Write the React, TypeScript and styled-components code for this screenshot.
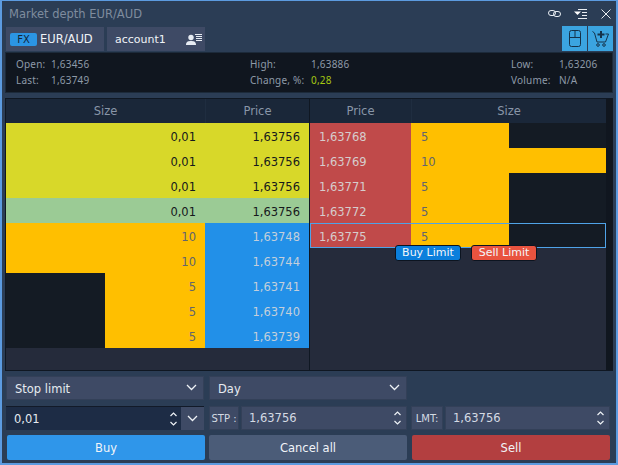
import React from 'react'
import styled, { createGlobalStyle } from 'styled-components'

const Global = createGlobalStyle`
  html, body { margin: 0; padding: 0; background: #2b3d55; }
  * { box-sizing: border-box; }
  body { font-family: "DejaVu Sans", Tahoma, sans-serif; font-size: 12px; }
`

type Level = { size: string; price: string; fill: number; kind?: 'own' | 'last' }

const bids: Level[] = [
  { size: '0,01', price: '1,63756', fill: 1, kind: 'own' },
  { size: '0,01', price: '1,63756', fill: 1, kind: 'own' },
  { size: '0,01', price: '1,63756', fill: 1, kind: 'own' },
  { size: '0,01', price: '1,63756', fill: 1, kind: 'last' },
  { size: '10', price: '1,63748', fill: 1 },
  { size: '10', price: '1,63744', fill: 1 },
  { size: '5', price: '1,63741', fill: 0.5 },
  { size: '5', price: '1,63740', fill: 0.5 },
  { size: '5', price: '1,63739', fill: 0.5 },
]

const asks: Level[] = [
  { size: '5', price: '1,63768', fill: 0.5 },
  { size: '10', price: '1,63769', fill: 1 },
  { size: '5', price: '1,63771', fill: 0.5 },
  { size: '5', price: '1,63772', fill: 0.5 },
  { size: '5', price: '1,63775', fill: 0.5 },
]

export default function App() {
  return (
    <>
      <Global />
      <Win>
        <TitleBar>
          <Title>Market depth EUR/AUD</Title>
          <WinIcons>
            <LinkIcon />
            <MenuIcon />
            <CloseIcon />
          </WinIcons>
        </TitleBar>

        <TabRow>
          <Tab $w={98}>
            <FxBadge>FX</FxBadge>
            EUR/AUD
          </Tab>
          <AccountTab>
            account1
            <AccountIcon />
          </AccountTab>
          <ToolGroup>
            <ToolBtn><MouseIcon /></ToolBtn>
            <ToolBtn><CartIcon /></ToolBtn>
          </ToolGroup>
        </TabRow>

        <Info>
          <InfoCol $w={234}>
            <InfoRow><InfoLabel $w={35}>Open:</InfoLabel>1,63456</InfoRow>
            <InfoRow><InfoLabel $w={35}>Last:</InfoLabel>1,63749</InfoRow>
          </InfoCol>
          <InfoCol $w={261}>
            <InfoRow><InfoLabel $w={61}>High:</InfoLabel>1,63886</InfoRow>
            <InfoRow><InfoLabel $w={61}>Change, %:</InfoLabel><Green>0,28</Green></InfoRow>
          </InfoCol>
          <InfoCol $w={90}>
            <InfoRow><InfoLabel $w={48}>Low:</InfoLabel>1,63206</InfoRow>
            <InfoRow><InfoLabel $w={48}>Volume:</InfoLabel>N/A</InfoRow>
          </InfoCol>
        </Info>

        <Book>
          <BidSide>
            <HeadRow $cols="199px 1fr">
              <HeadCell>Size</HeadCell>
              <HeadCell>Price</HeadCell>
            </HeadRow>
            {bids.map((l, i) => (
              <BidRow key={i}>
                <BidSize>
                  <SizeBar $kind={l.kind} style={{ width: `${Math.ceil(l.fill * 199)}px` }} />
                  <SizeText $kind={l.kind}>{l.size}</SizeText>
                </BidSize>
                <BidPrice $kind={l.kind}>{l.price}</BidPrice>
              </BidRow>
            ))}
          </BidSide>
          <AskSide>
            <HeadRow $cols="101px 1fr">
              <HeadCell>Price</HeadCell>
              <HeadCell>Size</HeadCell>
            </HeadRow>
            {asks.map((l, i) => (
              <AskRow key={i} $active={i === asks.length - 1}>
                <AskPrice>{l.price}</AskPrice>
                <AskSize>
                  <AskBar style={{ width: `${l.fill * 100}%` }} />
                  <AskText>{l.size}</AskText>
                </AskSize>
              </AskRow>
            ))}
            <LimitTips>
              <LimitTip $color="#0b7fdc">Buy Limit</LimitTip>
              <LimitTip $color="#e9533f">Sell Limit</LimitTip>
            </LimitTips>
          </AskSide>
          <Rail />
        </Book>

        <SelectRow>
          <Select>Stop limit<Chevron /></Select>
          <Select>Day<Chevron /></Select>
        </SelectRow>

        <InputRow>
          <QtyField>
            <QtyValue>0,01</QtyValue>
            <Spinner />
            <QtyDrop><Chevron /></QtyDrop>
          </QtyField>
          <PriceGroup>
            <PriceTag $w={30}>STP :</PriceTag>
            <PriceField $w={166}>1,63756<Spinner /></PriceField>
          </PriceGroup>
          <PriceGroup>
            <PriceTag $w={32}>LMT:</PriceTag>
            <PriceField $w={165}>1,63756<Spinner /></PriceField>
          </PriceGroup>
        </InputRow>

        <ButtonRow>
          <ActionBtn $bg="#2f96ea">Buy</ActionBtn>
          <ActionBtn $bg="#4b5c78">Cancel all</ActionBtn>
          <ActionBtn $bg="#b33f40">Sell</ActionBtn>
        </ButtonRow>
      </Win>
    </>
  )
}

/* icons */

const Svg = styled.svg`
  display: block;
  flex: none;
`

function LinkIcon() {
  return (
    <Svg width="13" height="7" viewBox="0 0 13 7" fill="none" stroke="#e8edf2" strokeWidth="1">
      <rect x="0.5" y="0.5" width="7" height="5" rx="2.5" />
      <rect x="5.5" y="1.5" width="7" height="5" rx="2.5" />
    </Svg>
  )
}

function MenuIcon() {
  return (
    <Svg width="13" height="10" viewBox="0 0 13 10" fill="none">
      <path d="M0 2.500h7L3.500 6z" fill="#fff" />
      <path d="M4 .5h9M8 3.500h5M8 6.500h5M4 9.500h9" stroke="#e8edf2" />
    </Svg>
  )
}

function CloseIcon() {
  return (
    <Svg width="10" height="10" viewBox="0 0 10 10" fill="none" stroke="#e8edf2">
      <path d="M.5.5l9 9M9.500.5l-9 9" />
    </Svg>
  )
}

function AccountIcon() {
  return (
    <Svg width="17" height="11" viewBox="0 0 17 11" fill="#e6ebf2">
      <circle cx="5" cy="3.500" r="2.700" />
      <path d="M0 11c0-3.500 2-4 5-4s5 .5 5 4z" />
      <path d="M9 .5h7M10 2.500h6M10 4.500h6M10 6.500h6" stroke="#e6ebf2" fill="none" />
    </Svg>
  )
}

function MouseIcon() {
  return (
    <Svg width="12" height="17" viewBox="0 0 12 17" fill="none" stroke="#15324a">
      <rect x="0.500" y="0.500" width="11" height="16" rx="2" />
      <path d="M0.500 7.500h11M6 .5v7" />
    </Svg>
  )
}

function CartIcon() {
  return (
    <Svg width="17" height="16" viewBox="0 0 17 16" fill="none" stroke="#15324a">
      <path d="M.5.5l2 1.500 2.500 9h8.500l3-8h-3" />
      <path d="M9 0v7M5.500 3.500h7" strokeWidth="2" />
      <circle cx="6" cy="14" r="1.300" />
      <circle cx="12" cy="14" r="1.300" />
    </Svg>
  )
}

function Chevron() {
  return (
    <Svg width="11" height="7" viewBox="0 0 11 7" fill="none" stroke="#eef2f6" strokeWidth="1.300">
      <path d="M1 1l4.500 4.500L10 1" />
    </Svg>
  )
}

function Spinner() {
  return (
    <SpinnerBox>
      <Svg width="7" height="5" viewBox="0 0 7 5" fill="none" stroke="#eef2f6" strokeWidth="1.200">
        <path d="M.5 4l3-3 3 3" />
      </Svg>
      <Svg width="7" height="5" viewBox="0 0 7 5" fill="none" stroke="#eef2f6" strokeWidth="1.200">
        <path d="M.5 1l3 3 3-3" />
      </Svg>
    </SpinnerBox>
  )
}

/* layout */

const Win = styled.div`
  width: 618px;
  height: 465px;
  background: #2b3d55;
  border: 1px solid #5c9be0;
  border-width: 1px 2px 2px 2px;
  padding: 0 3px;
  display: flex;
  flex-direction: column;
  overflow: hidden;
`

const TitleBar = styled.div`
  height: 24px;
  display: flex;
  align-items: center;
  justify-content: space-between;
  padding: 1px 2px 0 4px;
`

const Title = styled.div`
  color: #7f8c9e;
  font-size: 11.500px;
`

const WinIcons = styled.div`
  display: flex;
  align-items: center;
  gap: 14px;
  & > svg:first-child { margin-right: -1px; }
`

const TabRow = styled.div`
  height: 26px;
  display: flex;
  align-items: flex-end;
  gap: 3px;
  margin: 0 0 1px 1px;
`

const Tab = styled.div<{ $w: number }>`
  width: ${(p) => p.$w}px;
  height: 24px;
  background: #3e4a65;
  color: #f0f3f7;
  display: flex;
  align-items: center;
  font-size: 11.500px;
  padding-left: 4px;
  gap: 3px;
`

const FxBadge = styled.span`
  width: 27px;
  height: 13px;
  border-radius: 2px;
  background: #2b95e4;
  color: #10263c;
  font-size: 10px;
  line-height: 13px;
  text-align: center;
`

const AccountTab = styled(Tab).attrs({ $w: 98 })`
  padding: 0 2px 0 8px;
  justify-content: space-between;
  font-size: 11px;
`

const ToolGroup = styled.div`
  margin-left: auto;
  display: flex;
  gap: 1px;
`

const ToolBtn = styled.div`
  width: 25px;
  height: 25px;
  background: #3ba4e0;
  display: flex;
  align-items: center;
  justify-content: center;
`

const Info = styled.div`
  height: 41px;
  background: #10161f;
  display: flex;
  padding: 3px 0 0 10px;
  border: 1px solid #1c2a3a;
  color: #8e9aa8;
  font-family: "Noto Sans", sans-serif;
  font-size: 10px;
  letter-spacing: 0.2px;
`

const InfoCol = styled.div<{ $w: number }>`
  width: ${(p) => p.$w}px;
  display: flex;
  flex-direction: column;
`

const InfoRow = styled.div`
  height: 16px;
  display: flex;
  align-items: center;
  white-space: nowrap;
`

const InfoLabel = styled.span<{ $w: number }>`
  width: ${(p) => p.$w}px;
`

const Green = styled.span`
  color: #a6c812;
`

const Book = styled.div`
  height: 273px;
  margin-top: 5px;
  display: flex;
  background: #0f1722;
  border: 1px solid #0f1722;
`

const BidSide = styled.div`
  width: 303px;
  background: #252b3b;
  display: flex;
  flex-direction: column;
`

const AskSide = styled.div`
  position: relative;
  width: 296px;
  margin-left: 1px;
  background: #252b3b;
  display: flex;
  flex-direction: column;
`

const Rail = styled.div`
  flex: 1;
  background: #10161f;
`

const HeadRow = styled.div<{ $cols: string }>`
  height: 24px;
  flex: none;
  display: grid;
  grid-template-columns: ${(p) => p.$cols};
  background: #1a2739;
`

const HeadCell = styled.div`
  display: flex;
  align-items: center;
  justify-content: center;
  color: #8996a8;
  font-size: 11.500px;
  border-left: 1px solid #1f2d40;
  &:first-child { border-left: none; }
`

const BidRow = styled.div`
  height: 25px;
  flex: none;
  display: grid;
  grid-template-columns: 199px 1fr;
  background: #141b24;
  font-size: 11.500px;
`

const BidSize = styled.div`
  position: relative;
  display: flex;
  align-items: center;
  justify-content: flex-end;
  padding: 2px 9px 0 0;
`

const SizeBar = styled.div<{ $kind?: string }>`
  position: absolute;
  top: 0;
  right: 0;
  bottom: 0;
  background: ${(p) => (p.$kind === 'own' ? '#d8d829' : p.$kind === 'last' ? '#9bcb95' : '#ffbf00')};
`

const SizeText = styled.span<{ $kind?: string }>`
  position: relative;
  color: ${(p) => (p.$kind ? '#16181c' : '#62646e')};
`

const BidPrice = styled.div<{ $kind?: string }>`
  display: flex;
  align-items: center;
  justify-content: flex-end;
  padding: 2px 9px 0 0;
  background: ${(p) => (p.$kind === 'own' ? '#d8d829' : p.$kind === 'last' ? '#9bcb95' : '#2290e8')};
  color: ${(p) => (p.$kind ? '#16181c' : '#c4cfda')};
`

const AskRow = styled.div<{ $active?: boolean }>`
  position: relative;
  height: 25px;
  flex: none;
  display: grid;
  grid-template-columns: 101px 1fr;
  background: #141b24;
  font-size: 11.500px;
  ${(p) => p.$active && '&::after { content: ""; position: absolute; inset: 0; border: 1px solid #4fa3e8; }'}
`

const AskPrice = styled.div`
  display: flex;
  align-items: center;
  padding: 2px 0 0 9px;
  background: #c04a4a;
  color: #d6cdcd;
`

const AskSize = styled.div`
  position: relative;
  display: flex;
  align-items: center;
  padding: 2px 0 0 10px;
`

const AskBar = styled.div`
  position: absolute;
  left: 0;
  top: 0;
  bottom: 0;
  background: #ffbf00;
`

const AskText = styled.span`
  position: relative;
  color: #62646e;
`

const LimitTips = styled.div`
  position: absolute;
  top: 146px;
  left: 85px;
  display: flex;
  gap: 10px;
`

const LimitTip = styled.div<{ $color: string }>`
  width: 66px;
  height: 16px;
  border: 1px solid #0c1420;
  border-radius: 3px;
  background: ${(p) => p.$color};
  color: #f3f6f9;
  font-size: 11px;
  line-height: 14px;
  text-align: center;
`

const SelectRow = styled.div`
  margin: 5px 0 0 1px;
  display: flex;
  gap: 5px;
`

const Select = styled.div`
  width: 198px;
  height: 24px;
  background: #3e4a65;
  border: 1px solid #334058;
  color: #e6eaf0;
  font-size: 11.500px;
  display: flex;
  align-items: center;
  justify-content: space-between;
  padding: 2px 6px 0 8px;
  & > svg { margin-top: -4px; }
`

const InputRow = styled.div`
  margin: 6px 0 0 1px;
  height: 24px;
  display: flex;
  gap: 5px;
`

const QtyField = styled.div`
  width: 198px;
  display: flex;
  align-items: center;
  background: #1d2c45;
  border-top: 1px solid #121a28;
  color: #e6eaf0;
  font-size: 11.500px;
`

const QtyValue = styled.span`
  flex: 1;
  padding-left: 8px;
`

const QtyDrop = styled.div`
  width: 23px;
  height: 100%;
  margin-left: 4px;
  background: #3e4a65;
  display: flex;
  align-items: center;
  justify-content: center;
`

const SpinnerBox = styled.div`
  display: flex;
  flex-direction: column;
  gap: 4px;
`

const PriceGroup = styled.div`
  display: flex;
  gap: 2px;
  flex: none;
  &:last-child { margin-left: -1px; }
`

const PriceTag = styled.div<{ $w: number }>`
  width: ${(p) => p.$w}px;
  background: #3e4a65;
  border: 1px solid #334058;
  color: #d4dae3;
  font-size: 10px;
  white-space: nowrap;
  display: flex;
  align-items: center;
  justify-content: center;
`

const PriceField = styled.div<{ $w: number }>`
  width: ${(p) => p.$w}px;
  background: #3e4a65;
  border: 1px solid #334058;
  color: #d4dae3;
  font-size: 11.500px;
  display: flex;
  align-items: center;
  justify-content: space-between;
  padding: 0 5px 0 7px;
`

const ButtonRow = styled.div`
  margin: 5px 0 0 2px;
  display: flex;
  gap: 4px;
`

const ActionBtn = styled.div<{ $bg: string }>`
  width: 198px;
  height: 25px;
  border-radius: 2px;
  background: ${(p) => p.$bg};
  color: #f1f4f8;
  font-size: 11.500px;
  display: flex;
  align-items: center;
  justify-content: center;
  &:last-child { margin-left: 1px; }
`
